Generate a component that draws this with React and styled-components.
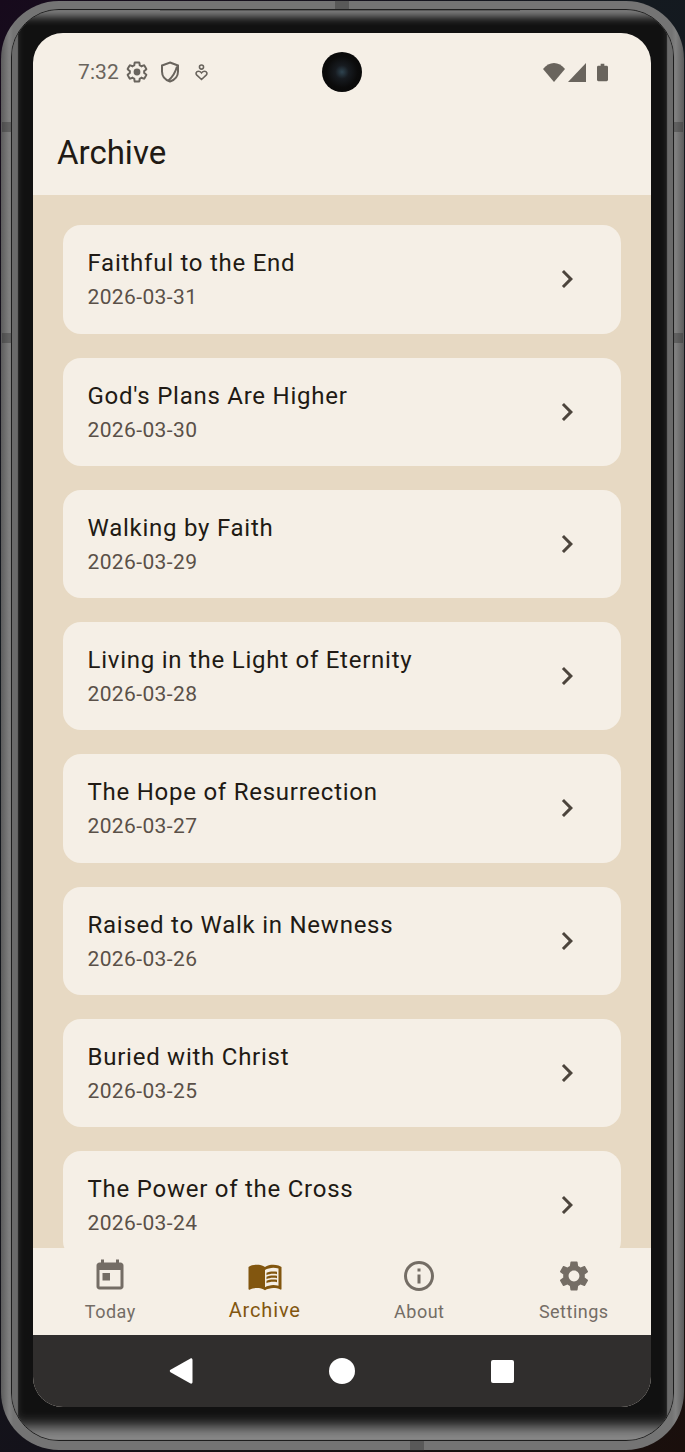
import React from 'react';
import styled, { createGlobalStyle } from 'styled-components';

const ENTRIES = [
  { title: 'Faithful to the End', date: '2026-03-31' },
  { title: "God's Plans Are Higher", date: '2026-03-30' },
  { title: 'Walking by Faith', date: '2026-03-29' },
  { title: 'Living in the Light of Eternity', date: '2026-03-28' },
  { title: 'The Hope of Resurrection', date: '2026-03-27' },
  { title: 'Raised to Walk in Newness', date: '2026-03-26' },
  { title: 'Buried with Christ', date: '2026-03-25' },
  { title: 'The Power of the Cross', date: '2026-03-24' },
];

const GEAR =
  'M19.14 12.94c.04-.3.06-.61.06-.94 0-.32-.02-.64-.07-.94l2.03-1.58c.18-.14.23-.41.12-.61l-1.92-3.32c-.12-.22-.37-.29-.59-.22l-2.39.96c-.5-.38-1.03-.7-1.62-.94l-.36-2.54c-.04-.24-.24-.41-.48-.41h-3.84c-.24 0-.43.17-.47.41l-.36 2.54c-.59.24-1.13.57-1.62.94l-2.39-.96c-.22-.08-.47 0-.59.22L2.74 8.87c-.12.21-.08.47.12.61l2.03 1.58c-.05.3-.09.63-.09.94s.02.64.07.94l-2.03 1.58c-.18.14-.23.41-.12.61l1.92 3.32c.12.22.37.29.59.22l2.39-.96c.5.38 1.03.7 1.62.94l.36 2.54c.05.24.24.41.48.41h3.84c.24 0 .44-.17.47-.41l.36-2.54c.59-.24 1.13-.56 1.62-.94l2.39.96c.22.08.47 0 .59-.22l1.92-3.32c.12-.22.07-.47-.12-.61l-2.01-1.58z';

const TABS = [
  {
    label: 'Today',
    paths: ['M19 3h-1V1h-2v2H8V1H6v2H5c-1.11 0-1.99.9-1.99 2L3 19c0 1.1.89 2 2 2h14c1.1 0 2-.9 2-2V5c0-1.1-.9-2-2-2zm0 16H5V8h14v11zM7 10h5v5H7z'],
  },
  {
    label: 'Archive',
    active: true,
    paths: [
      'M21 5c-1.11-.35-2.33-.5-3.5-.5-1.95 0-4.05.4-5.5 1.5-1.45-1.1-3.55-1.5-5.5-1.5S2.45 4.9 1 6v14.65c0 .25.25.5.5.5.1 0 .15-.05.25-.05C3.1 20.45 5.05 20 6.5 20c1.95 0 4.05.4 5.5 1.5 1.35-.85 3.8-1.5 5.5-1.5 1.65 0 3.35.3 4.75 1.05.1.05.15.05.25.05.25 0 .5-.25.5-.5V6c-.6-.45-1.25-.75-2-1zm0 13.5c-1.1-.35-2.3-.5-3.5-.5-1.7 0-4.15.65-5.5 1.5V8c1.35-.85 3.8-1.5 5.5-1.5 1.2 0 2.4.15 3.5.5v11.5z',
      'M17.5 10.5c.88 0 1.73.09 2.5.26V9.24c-.79-.15-1.64-.24-2.5-.24-1.7 0-3.24.29-4.5.83v1.66c1.13-.64 2.7-.99 4.5-.99zM13 12.49v1.66c1.13-.64 2.7-.99 4.5-.99.88 0 1.73.09 2.5.26V11.9c-.79-.15-1.64-.24-2.5-.24-1.7 0-3.24.3-4.5.83zM17.5 14.33c-1.7 0-3.24.29-4.5.83v1.66c1.13-.64 2.7-.99 4.5-.99.88 0 1.73.09 2.5.26v-1.52c-.79-.16-1.64-.24-2.5-.24z',
    ],
  },
  {
    label: 'About',
    paths: ['M11 7h2v2h-2zm0 4h2v6h-2zm1-9C6.48 2 2 6.48 2 12s4.48 10 10 10 10-4.48 10-10S17.52 2 12 2zm0 18c-4.41 0-8-3.59-8-8s3.59-8 8-8 8 3.59 8 8-3.59 8-8 8z'],
  },
  {
    label: 'Settings',
    paths: [`${GEAR}M12 15.6c-1.98 0-3.6-1.62-3.6-3.6s1.62-3.6 3.6-3.6 3.6 1.62 3.6 3.6-1.62 3.6-3.6 3.6z`],
  },
];

const GlobalStyle = createGlobalStyle`
  html, body {
    margin: 0;
    padding: 0;
    background: #120a14;
  }
  * {
    box-sizing: border-box;
  }
`;

const Page = styled.div`
  position: relative;
  width: 685px;
  height: 1452px;
  padding: 1px 1px 2px 1px;
  overflow: hidden;
  font-family: Roboto, 'Liberation Sans', sans-serif;
  background: linear-gradient(135deg, #170a1c 0%, #141a20 30%, #14121a 70%, #1a0f0c 100%);
`;

const Shell = styled.div`
  height: 100%;
  padding: 8px 10px 9px 10px;
  border-radius: 58px;
  background: linear-gradient(90deg, #5c5c5c 0%, #808080 1.2%, #747474 1.8%, #747474 98.2%, #808080 98.8%, #5c5c5c 100%);
`;

const Groove = styled.div`
  height: 100%;
  border: 1px solid #1d1d1d;
  border-radius: 48px;
  overflow: hidden;
`;

const Bezel = styled.div`
  height: 100%;
  padding: 23px 22px 33px 21px;
  background: #111;
  box-shadow:
    inset 6px 0 1px #6a6a6a,
    inset -6px 0 1px #6a6a6a,
    inset 0 8px 8px -1px #808080,
    inset 0 -16px 14px -2px #8a8a8a;
`;

const Screen = styled.div`
  position: relative;
  display: flex;
  flex-direction: column;
  height: 100%;
  border-radius: 30px;
  overflow: hidden;
  background: #f5efe6;
`;

const ButtonMark = styled.div`
  position: absolute;
  background: rgba(40, 40, 40, 0.35);
  left: ${p => p.$x}px;
  top: ${p => p.$y}px;
  width: ${p => p.$w}px;
  height: ${p => p.$h}px;
`;

const StatusBar = styled.div`
  display: flex;
  flex-shrink: 0;
  align-items: center;
  justify-content: space-between;
  height: 78px;
  padding: 0 43px 0 45px;
  color: #69645d;
`;

const StatusGroup = styled.div`
  display: flex;
  align-items: center;
  gap: ${p => p.$gap}px;
`;

const Time = styled.span`
  margin-right: 6px;
  font-size: 21px;
  line-height: 24px;
  letter-spacing: 0.1px;
`;

const StatusIcon = styled.svg`
  display: block;
  flex-shrink: 0;
  margin-left: ${p => p.$ml || 0}px;
  width: ${p => p.$w}px;
  height: ${p => p.$h}px;
`;

const Camera = styled.div`
  position: absolute;
  top: 19px;
  left: 289px;
  width: 40px;
  height: 40px;
  border-radius: 50%;
  background: radial-gradient(circle at 50% 50%, #2f4450 0%, #171b20 24%, #0b0b0b 55%, #050505 100%);
`;

const AppBar = styled.div`
  flex-shrink: 0;
  height: 84px;
  padding: 21px 24px 0 24px;
`;

const Title = styled.h1`
  margin: 0;
  font-size: 33px;
  font-weight: 400;
  line-height: 42px;
  color: #211a14;
`;

const List = styled.div`
  display: flex;
  flex: 1;
  flex-direction: column;
  gap: 24px;
  min-height: 0;
  padding: 30.35px 30px 0 30px;
  overflow: hidden;
  background: #e7d9c3;
`;

const Card = styled.div`
  display: flex;
  flex-shrink: 0;
  align-items: center;
  justify-content: space-between;
  height: 108.25px;
  padding: 0 36px 0 24.5px;
  border-radius: 18px;
  background: #f5efe6;
`;

const CardText = styled.div`
  display: flex;
  flex-direction: column;
  padding-bottom: 1px;
`;

const CardTitle = styled.div`
  font-size: 24px;
  line-height: 36px;
  letter-spacing: 0.75px;
  color: #211a14;
`;

const CardDate = styled.div`
  margin-top: 1px;
  font-size: 21px;
  line-height: 30px;
  letter-spacing: 0.38px;
  color: #5a5048;
`;

const Chevron = styled.svg`
  display: block;
  width: 36px;
  height: 36px;
  fill: #4c443c;
`;

const Nav = styled.div`
  display: grid;
  flex-shrink: 0;
  grid-template-columns: repeat(4, 1fr);
  height: 87px;
  background: #f5efe6;
`;

const Tab = styled.div`
  display: flex;
  flex-direction: column;
  align-items: center;
  padding-top: 10px;
  color: ${p => (p.$active ? '#82560f' : '#746d65')};
`;

const TabIcon = styled.svg`
  display: block;
  width: 36px;
  height: 36px;
  fill: currentColor;
`;

const TabLabel = styled.span`
  margin-top: ${p => (p.$active ? 3 : 5)}px;
  font-size: ${p => (p.$active ? 20 : 18)}px;
  line-height: 26px;
  letter-spacing: ${p => (p.$active ? 0.85 : 0.5)}px;
`;

const SystemNav = styled.div`
  display: flex;
  flex-shrink: 0;
  align-items: center;
  height: 72px;
  padding-left: 136px;
  background: #302e2d;
`;

const BackKey = styled.svg`
  display: block;
  width: 24px;
  height: 28px;
`;

const HomeKey = styled.div`
  width: 26px;
  height: 26px;
  margin-left: 136px;
  border-radius: 50%;
  background: #fff;
`;

const RecentKey = styled.div`
  width: 23px;
  height: 23px;
  margin-left: 136px;
  border-radius: 2px;
  background: #fff;
`;

const App = () => (
  <Page>
    <GlobalStyle />
    <Shell>
      <Groove>
        <Bezel>
          <Screen>
            <StatusBar>
              <StatusGroup $gap={0}>
                <Time>7:32</Time>
                <StatusIcon $w={24} $h={24} viewBox="0 0 24 24">
                  <path d={GEAR} fill="none" stroke="currentColor" strokeWidth="2" />
                  <circle cx="12" cy="12" r="3.4" fill="currentColor" />
                </StatusIcon>
                <StatusIcon $w={20} $h={22} $ml={11} viewBox="0 0 20 22" fill="none" stroke="currentColor" strokeWidth="2">
                  <path d="M10 1.5 L18 4.5 V10.5 C18 15.5 14.5 19 10 20.5 C5.5 19 2 15.5 2 10.5 V4.5 Z" />
                  <path d="M17 5.5 C15.5 11 13 15.5 8.5 19.5" />
                </StatusIcon>
                <StatusIcon $w={13} $h={17} $ml={15} viewBox="0 0 14 18" fill="none" stroke="currentColor" strokeWidth="1.7">
                  <circle cx="7" cy="3.2" r="2.2" />
                  <path d="M7 16.5 L2 11.8 C0.3 10 1.5 7.6 3.6 7.6 C5 7.6 6.2 8.3 7 9.4 C7.8 8.3 9 7.6 10.4 7.6 C12.5 7.6 13.7 10 12 11.8 Z" />
                </StatusIcon>
              </StatusGroup>
              <StatusGroup $gap={3}>
                <StatusIcon $w={22} $h={19} viewBox="0 0 22 19" fill="currentColor">
                  <path d="M0 6 C3 2 7 0 11 0 C15 0 19 2 22 6 L11 19 Z" />
                </StatusIcon>
                <StatusIcon $w={18} $h={19} viewBox="0 0 18 19" fill="currentColor">
                  <path d="M18 0 V19 H0 Z" />
                </StatusIcon>
                <StatusIcon $w={11} $h={19} $ml={8} viewBox="0 0 12 19" fill="currentColor">
                  <path d="M4 0 H8 V2 H10.5 C11.3 2 12 2.7 12 3.5 V17.5 C12 18.3 11.3 19 10.5 19 H1.5 C0.7 19 0 18.3 0 17.5 V3.5 C0 2.7 0.7 2 1.5 2 H4 Z" />
                </StatusIcon>
              </StatusGroup>
            </StatusBar>
            <Camera />
            <AppBar>
              <Title>Archive</Title>
            </AppBar>
            <List>
              {ENTRIES.map(entry => (
                <Card key={entry.date}>
                  <CardText>
                    <CardTitle>{entry.title}</CardTitle>
                    <CardDate>{entry.date}</CardDate>
                  </CardText>
                  <Chevron viewBox="0 0 24 24">
                    <path d="M10 6L8.59 7.41 13.17 12l-4.58 4.59L10 18l6-6z" />
                  </Chevron>
                </Card>
              ))}
            </List>
            <Nav>
              {TABS.map(tab => (
                <Tab key={tab.label} $active={tab.active}>
                  <TabIcon viewBox="0 0 24 24">
                    {tab.paths.map(d => (
                      <path key={d} d={d} />
                    ))}
                  </TabIcon>
                  <TabLabel $active={tab.active}>{tab.label}</TabLabel>
                </Tab>
              ))}
            </Nav>
            <SystemNav>
              <BackKey viewBox="0 0 24 28">
                <path d="M21.5 1.5 C22.5 1 23.5 1.8 23.5 3 V25 C23.5 26.2 22.5 27 21.5 26.5 L1.5 15.2 C0.5 14.6 0.5 13.4 1.5 12.8 Z" fill="#fff" />
              </BackKey>
              <HomeKey />
              <RecentKey />
            </SystemNav>
          </Screen>
        </Bezel>
      </Groove>
    </Shell>
    <ButtonMark $x={2} $y={122} $w={10} $h={10} />
    <ButtonMark $x={2} $y={333} $w={10} $h={10} />
    <ButtonMark $x={673} $y={122} $w={10} $h={10} />
    <ButtonMark $x={673} $y={333} $w={10} $h={10} />
    <ButtonMark $x={335} $y={0} $w={14} $h={9} />
    <ButtonMark $x={410} $y={1441} $w={14} $h={10} />
    <ButtonMark $x={160} $y={9} $w={360} $h={2} />
  </Page>
);

export default App;
